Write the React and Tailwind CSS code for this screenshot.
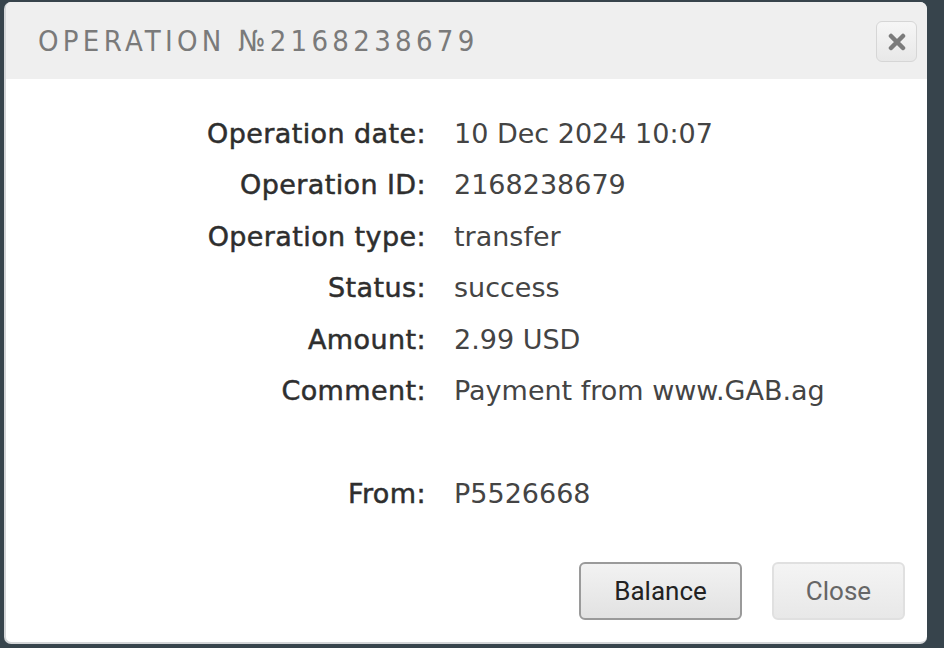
import React from "react";

const rows = [
  { label: "Operation date:", value: "10 Dec 2024 10:07" },
  { label: "Operation ID:", value: "2168238679" },
  { label: "Operation type:", value: "transfer" },
  { label: "Status:", value: "success" },
  { label: "Amount:", value: "2.99 USD" },
  { label: "Comment:", value: "Payment from www.GAB.ag" },
  { label: "", value: "" },
  { label: "From:", value: "P5526668" },
];

export default function App() {
  return (
    <div className="w-[944px] h-[648px] bg-[#37444c] pt-[2px] pl-[4px] overflow-hidden">
      <div className="w-[923px] h-[642px] bg-white rounded-[7px] border-l-2 border-b-2 border-[#d4d6d8] overflow-hidden flex flex-col">
        {/* header */}
        <div className="h-[77px] shrink-0 bg-[#efefef] flex items-center justify-between pl-[32px] pr-[10px] pt-[2px]">
          <span className="text-[29px] tracking-[4.3px] text-[#7a7a7a] font-['DejaVu_Sans_Condensed',sans-serif] font-light">
            OPERATION №2168238679
          </span>
          <button className="w-[41px] h-[41px] rounded-[6px] border border-[#d6d6d6] bg-gradient-to-b from-[#f6f6f6] to-[#e8e8e8] flex items-center justify-center">
            <svg width="18" height="18" viewBox="0 0 18 18">
              <path d="M3 3 L15 15 M15 3 L3 15" stroke="#7b7b7b" strokeWidth="4.5" strokeLinecap="round" />
            </svg>
          </button>
        </div>

        {/* details */}
        <div className="pt-[29px] flex flex-col font-['DejaVu_Sans',sans-serif] text-[27px]">
          {rows.map((r, i) => (
            <div key={i} className="h-[51.5px] flex items-center">
              <span className="w-[420px] shrink-0 text-right tracking-[0.4px] text-[#2e2e2e] [-webkit-text-stroke:0.5px_#2e2e2e]">
                {r.label}
              </span>
              <span className="pl-[28px] text-[#444]">{r.value}</span>
            </div>
          ))}
        </div>

        {/* actions */}
        <div className="mt-auto mb-[22px] flex justify-end gap-[30px] pr-[22px] font-['Roboto',sans-serif] text-[26px]">
          <button className="w-[163px] h-[58px] rounded-[6px] border-2 border-[#9a9a9a] bg-gradient-to-b from-[#f2f2f2] to-[#e2e2e2] text-[#222]">
            Balance
          </button>
          <button className="w-[133px] h-[58px] rounded-[6px] border-2 border-[#e0e0e0] bg-gradient-to-b from-[#f4f4f4] to-[#e8e8e8] text-[#666]">
            Close
          </button>
        </div>
      </div>
    </div>
  );
}
